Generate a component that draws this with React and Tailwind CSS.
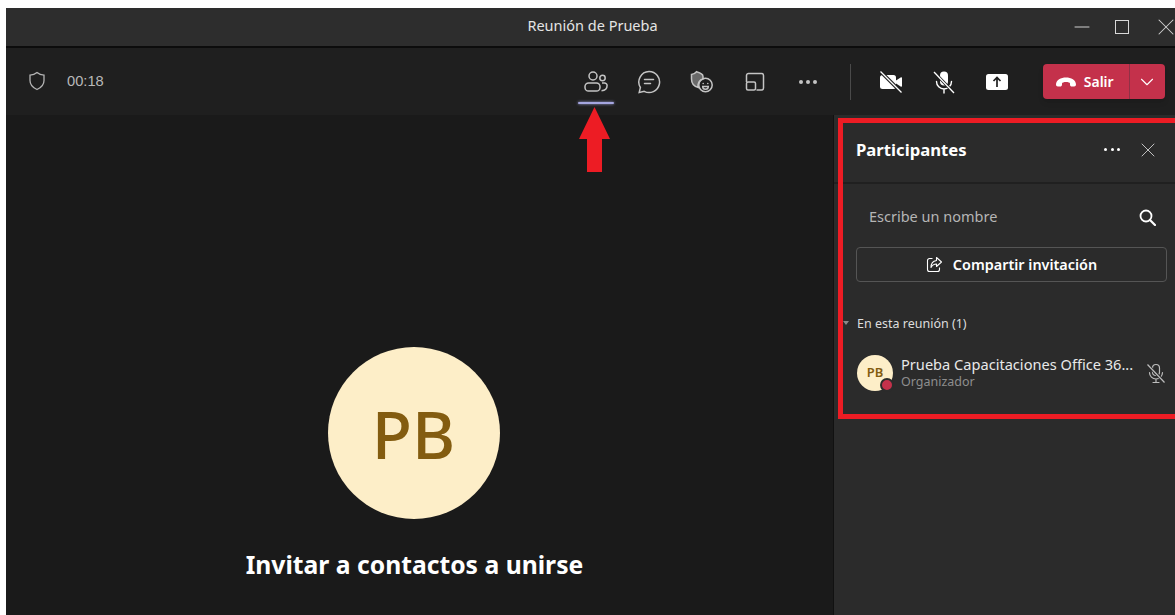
import React from "react";
import { X, Minus, ChevronDown } from "lucide-react";

// Meeting toolbar glyphs, drawn on a 24 unit grid
const PeopleIcon = () => (
  <svg width="24" height="24" viewBox="0 0 24 24" fill="none" stroke="currentColor" strokeWidth="1.5">
    <circle cx="9" cy="6" r="4" />
    <circle cx="18.5" cy="8" r="2.7" />
    <rect x="1" y="13" width="15" height="8" rx="3.6" />
    <path d="M18 13h2.500a2.600 2.600 0 0 1 2.600 2.600c0 3-2.200 5-5.600 5.200" />
  </svg>
);

const ChatIcon = () => (
  <svg width="24" height="24" viewBox="0 0 24 24" fill="none" stroke="currentColor" strokeWidth="1.5">
    <path d="M12 1.500a10.500 10.500 0 1 1-4.800 19.800l-5 1.200 1.200-5A10.500 10.500 0 0 1 12 1.500z" />
    <path d="M7.500 9.500h9M7.500 13.500h6" strokeLinecap="round" />
  </svg>
);

const HandIcon = () => (
  <svg width="24" height="24" viewBox="0 0 24 24" fill="none" stroke="currentColor" strokeWidth="1.5">
    <path d="M1.500 4.500c2-.3 3.500-1 5-2.800 2 .6 4 1.300 5 2.300 1.200.6 1.500 1.400 1.500 2.600V9a6.500 6.500 0 0 0-4.600 8.600C4 16.500 1.500 13 1.500 9z" fill="currentColor" fillOpacity="0.45" />
    <circle cx="15.500" cy="15" r="6.700" />
    <circle cx="13.200" cy="13.500" r="0.800" fill="currentColor" stroke="none" />
    <circle cx="17.800" cy="13.500" r="0.800" fill="currentColor" stroke="none" />
    <path d="M12.700 16.500h5.600a2.800 2.800 0 0 1-5.600 0z" />
  </svg>
);

const TrayIcon = () => (
  <svg width="24" height="24" viewBox="0 0 24 24" fill="none" stroke="currentColor" strokeWidth="1.500">
    <path d="M3.500 12V5.500a2 2 0 0 1 2-2h13a2 2 0 0 1 2 2V18a2 2 0 0 1-2 2h-5" />
    <rect x="3.500" y="12" width="9" height="8" rx="1.500" />
  </svg>
);

const VideoOffIcon = () => (
  <svg width="26" height="26" viewBox="0 0 26 26" fill="none">
    <rect x="2" y="6" width="16" height="14" rx="2.500" fill="currentColor" />
    <path d="M18 11.500l5-3.200c.5-.3 1 .1 1 .6v8.200c0 .5-.5.900-1 .6l-5-3.200z" fill="currentColor" />
    <path d="M2.500 2.500l21 21" stroke="#1f1f1f" strokeWidth="3.500" />
    <path d="M2.500 2.500l21 21" stroke="currentColor" strokeWidth="1.300" />
  </svg>
);

const MicOffIcon = ({ size = 26 }) => (
  <svg width={size} height={size} viewBox="0 0 26 26" fill="none">
    <rect x="9" y="2.500" width="8" height="14" rx="4" fill="currentColor" />
    <path d="M5.500 12.500a7.500 7.500 0 0 0 15 0M13 20v4" stroke="currentColor" strokeWidth="1.400" strokeLinecap="round" />
    <path d="M3 3l20 21" stroke="#1f1f1f" strokeWidth="3" />
    <path d="M3 3l20 21" stroke="currentColor" strokeWidth="1.300" />
  </svg>
);

// Outlined variant used on the participant row
const MicOffOutline = () => (
  <svg width="22" height="22" viewBox="0 0 22 22" fill="none" stroke="currentColor" strokeWidth="1.200">
    <rect x="7.500" y="2.500" width="7" height="11" rx="3.500" />
    <path d="M4.500 10.500a6.500 6.500 0 0 0 13 0M11 17v3.500M8 20.500h6" strokeLinecap="round" />
    <path d="M2.500 2.500l17 18" stroke="#2b2b2b" strokeWidth="3" />
    <path d="M2.500 2.500l17 18" />
  </svg>
);

const ShareTrayIcon = () => (
  <svg width="24" height="24" viewBox="0 0 24 24">
    <rect x="1" y="4" width="22" height="16" rx="2.500" fill="currentColor" />
    <path d="M12 17V8M8.500 11L12 7.500 15.500 11" fill="none" stroke="#1f1f1f" strokeWidth="1.700" />
  </svg>
);

const HangUpIcon = () => (
  <svg width="22" height="12" viewBox="0 0 22 12">
    <path d="M1 8.500C1 4 6 1.500 11 1.500S21 4 21 8.500c0 1.300-.8 2-1.800 2h-2.400c-1 0-1.800-.7-1.800-1.800V7.500C15 6.500 13 6 11 6s-4 .5-4 1.500v1.200c0 1.100-.8 1.800-1.800 1.800H2.800C1.800 10.500 1 9.800 1 8.500z" fill="currentColor" />
  </svg>
);

const ShareBoxIcon = () => (
  <svg width="17" height="17" viewBox="0 0 17 17" fill="none" stroke="currentColor" strokeWidth="1.100">
    <path d="M6.500 2.500H3.500a2 2 0 0 0-2 2v9a2 2 0 0 0 2 2h8a2 2 0 0 0 2-2v-2" />
    <path d="M10.500 1.500l5 4.500-5 4.500V8c-2.500 0-4.200 1-5.500 3.500 0-4 2-6.500 5.500-7z" strokeLinejoin="round" />
  </svg>
);

const ShieldIcon = () => (
  <svg width="18" height="20" viewBox="0 0 18 20" fill="none" stroke="currentColor" strokeWidth="1.300">
    <path d="M9 1.500c2 1.700 4.300 2.500 7 2.700v5.300c0 4-2.400 7-7 9-4.600-2-7-5-7-9V4.200c2.700-.2 5-1 7-2.700z" />
  </svg>
);

const SearchIcon = () => (
  <svg width="17" height="17" viewBox="0 0 17 17" fill="none" stroke="currentColor" strokeWidth="1.800" className="ml-auto text-white">
    <circle cx="7" cy="7" r="5.500" />
    <path d="M11 11l5 5" strokeLinecap="round" strokeWidth="2.200" />
  </svg>
);

const ToolButton = ({ children, className }) => (
  <div className={`w-[53px] flex justify-center items-center ${className}`}>{children}</div>
);

const App = () => {
  return (
    <div className="relative h-[615px] w-[1175px] overflow-hidden bg-white pt-2 pl-[6px] font-['Noto_Sans','Open_Sans',sans-serif]">
      <div className="flex h-[607px] flex-col bg-[#1a1a1a]">
        {/* Title bar */}
        <div className="relative flex h-10 shrink-0 items-center justify-center border-b-2 border-[#0c0c0c] bg-[#2d2d2d]">
          <span className="-mt-[3px] ml-[4px] text-[14.5px] text-[#e4e4e4]">Reunión de Prueba</span>
          <div className="absolute right-0 top-0 flex h-[38px] items-center text-[#d0d0d0]">
            <Minus size={24} strokeWidth={1} />
            <span className="ml-[21px] h-[14px] w-[14px] border-[1.5px] border-[#d8d8d8]" />
            <X size={28} strokeWidth={0.9} className="ml-[23px] -mr-[5px]" />
          </div>
        </div>

        {/* Meeting toolbar */}
        <div className="flex h-[67px] shrink-0 items-center bg-[#1f1f1f]">
          <div className="flex items-center pl-[22px] text-[#b4b4b4]">
            <ShieldIcon />
            <span className="ml-[21px] text-[14.700px] text-[#b8b8b8] font-['Liberation_Sans',sans-serif]">00:18</span>
          </div>
          <div className="ml-[466px] flex items-center text-[#c4c4c4]">
            <ToolButton className="relative">
              <PeopleIcon />
              <span className="absolute -bottom-[10px] left-[8px] h-[2px] w-[36px] rounded-full bg-[#a5a6e0] shadow-[0_0_3px_#a5a6e0]" />
            </ToolButton>
            <ToolButton><ChatIcon /></ToolButton>
            <ToolButton><HandIcon /></ToolButton>
            <ToolButton><TrayIcon /></ToolButton>
            <ToolButton>
              <div className="flex gap-[3px]">
                <span className="h-1 w-1 rounded-full bg-current" />
                <span className="h-1 w-1 rounded-full bg-current" />
                <span className="h-1 w-1 rounded-full bg-current" />
              </div>
            </ToolButton>
          </div>
          <div className="ml-[15px] h-[36px] w-px bg-[#4a4a4a]" />
          <div className="ml-[14px] flex items-center text-white">
            <ToolButton><VideoOffIcon /></ToolButton>
            <ToolButton><MicOffIcon /></ToolButton>
            <ToolButton><ShareTrayIcon /></ToolButton>
          </div>
          <div className="ml-[19px] flex h-[35px] w-[122px] items-center rounded bg-[#c4314b] text-white shadow-md">
            <div className="flex h-full w-[87px] items-center gap-[7px] border-r border-[#8f3146] pl-3">
              <HangUpIcon />
              <span className="text-sm font-semibold">Salir</span>
            </div>
            <div className="flex flex-1 justify-center">
              <ChevronDown size={22} strokeWidth={1.2} />
            </div>
          </div>
        </div>

        <div className="flex min-h-0 flex-1">
          {/* Stage */}
          <div className="flex w-[828px] shrink-0 flex-col items-center border-r border-[#111111] pr-[12px]">
            <div className="mt-[232px] flex h-[172px] w-[172px] items-center justify-center rounded-full bg-[#fdeec8] text-[66px] font-medium text-[#835c10]">
              PB
            </div>
            <div className="ml-[2px] mt-[27px] text-[24.700px] font-bold text-white">Invitar a contactos a unirse</div>
          </div>

          {/* Participants panel */}
          <div className="flex-1 bg-[#2b2b2b]">
            <div className="flex h-[69px] items-center border-b-2 border-[#202020] pl-[22px] pr-[18px] pt-[2px] text-white">
              <span className="text-[16.700px] font-bold">Participantes</span>
              <div className="ml-auto flex items-center gap-[16px]">
                <div className="flex gap-[3.500px]">
                  <span className="h-[3px] w-[3px] rounded-full bg-current" />
                  <span className="h-[3px] w-[3px] rounded-full bg-current" />
                  <span className="h-[3px] w-[3px] rounded-full bg-current" />
                </div>
                <X size={24} strokeWidth={1} className="-mr-[3px] text-[#c0c0c0]" />
              </div>
            </div>
            <div className="flex h-[63px] items-center pl-[35px] pr-[19px] pt-[3px] text-[14.500px] text-[#b5b5b5]">
              <span>Escribe un nombre</span>
              <SearchIcon />
            </div>
            <div className="ml-[22px] flex h-[35px] w-[311px] items-center justify-center gap-[10px] rounded border border-[#555555] text-[14.400px] font-semibold text-white">
              <ShareBoxIcon />
              <span>Compartir invitación</span>
            </div>
            <div className="relative ml-[23px] mt-[33px] text-[12.500px] text-[#dddddd]">
              <span className="absolute -left-[14px] top-[6px] h-0 w-0 border-x-[3px] border-t-[4px] border-x-transparent border-t-[#8a8a8a]" />
              En esta reunión (1)
            </div>
            <div className="mt-[21px] flex items-center pl-[23px] pr-[8px]">
              <div className="relative flex h-9 w-9 shrink-0 items-center justify-center rounded-full bg-[#fdeec8] text-[13px] font-semibold text-[#835c10]">
                PB
                <span className="absolute -bottom-[1px] -right-[1px] h-[14px] w-[14px] rounded-full border-2 border-[#2b2b2b] bg-[#c4314b]" />
              </div>
              <div className="ml-[8px] min-w-0 flex-1 leading-none">
                <div className="text-[14.600px] leading-[18px] text-[#e8e8e8]">Prueba Capacitaciones Office 36...</div>
                <div className="text-[12.500px] leading-[18px] text-[#8e8e8e]">Organizador</div>
              </div>
              <div className="text-[#bdbdbd]"><MicOffOutline /></div>
            </div>
          </div>
        </div>
      </div>

      {/* Red callouts laid over the app */}
      <div className="absolute left-[838px] top-[118px] h-[301px] w-[342px] border-[5px] border-[#ed1c24]" />
      <svg className="absolute left-[579px] top-[107px]" width="31" height="65" viewBox="0 0 31 65">
        <path d="M15.500 0L31 32H23V65H8V32H0z" fill="#ed1c24" />
      </svg>
    </div>
  );
};

export default App;
